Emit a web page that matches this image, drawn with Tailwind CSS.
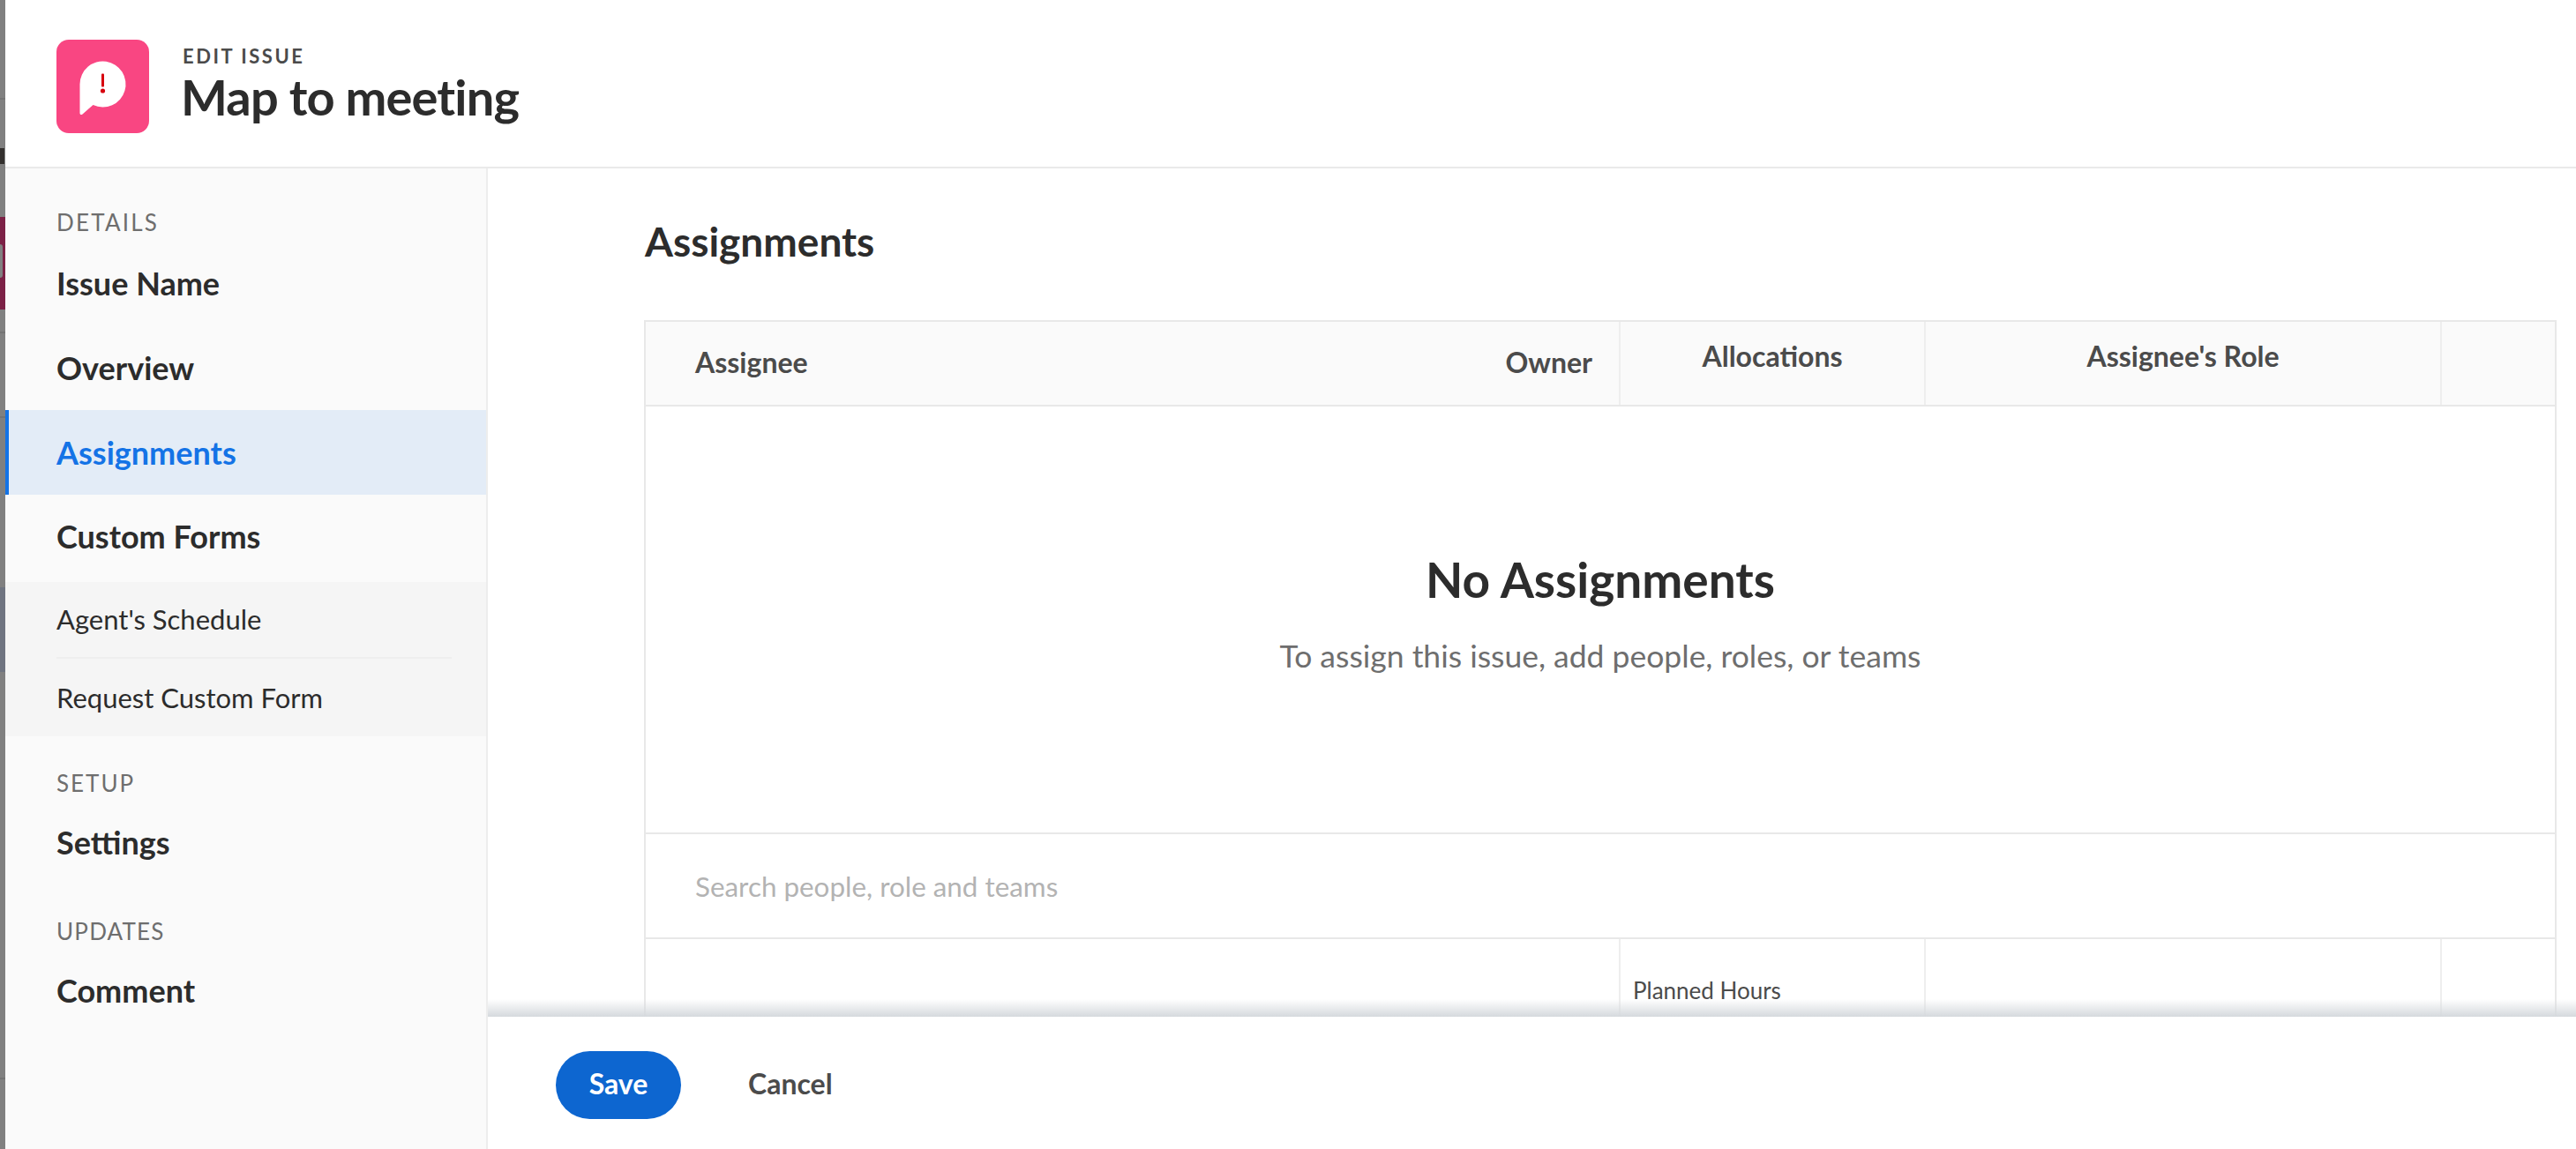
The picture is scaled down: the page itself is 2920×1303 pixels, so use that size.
<!DOCTYPE html>
<html lang="en">
<head>
<meta charset="utf-8">
<title>Edit Issue</title>
<script src="https://cdn.jsdelivr.net/npm/@tailwindcss/browser@4"></script>
</head>
<body class="bg-white">
<div class="flex h-[1303px] w-[2920px] overflow-hidden font-['Lato','Liberation_Sans',sans-serif] text-[#2c2c2c]">
  <div class="relative h-full w-[6px] shrink-0 bg-[#808080]">
    <div class="h-[113px] border-b-2 border-[#747474]"></div>
    <div class="absolute left-0 top-[168px] h-[18px] w-[5px] bg-[#33302e]"></div>
    <div class="absolute left-0 top-[246px] h-[105px] w-full bg-[#7c2146]"></div>
    <div class="absolute left-0 top-[277px] h-[38px] w-[3px] rounded-r-full bg-[#808080]"></div>
    <div class="absolute left-0 top-[376px] h-[2px] w-full bg-[#747474]"></div>
    <div class="absolute left-0 top-[472px] h-[2px] w-full bg-[#747474]"></div>
    <div class="absolute left-0 top-[666px] h-[96px] w-full bg-[#6f7480]"></div>
    <div class="absolute left-0 top-[1222px] h-[2px] w-full bg-[#747474]"></div>
  </div>
  <div class="flex min-w-0 flex-1 flex-col">
    <header class="flex h-[191px] shrink-0 items-start border-b-2 border-[#eaeaea] pl-[58px] pt-[45px]">
      <div class="h-[106px] w-[105px] shrink-0 rounded-[14px] bg-[#f94682]">
        <svg viewBox="0 0 105 105" class="h-full w-full">
          <path d="M26.5 50a26 26 0 1 1 15 23.6L29.5 84c-1.5 1.2-3 .5-3-1.5Z" fill="#fff"/>
          <rect x="51" y="38" width="3" height="15" rx="1" fill="#d7000e"/>
          <circle cx="52.5" cy="57.5" r="2.6" fill="#d7000e"/>
        </svg>
      </div>
      <div class="ml-[38px] flex flex-col">
        <div class="mt-[6px] text-[22px] font-bold leading-[26px] tracking-[2.5px] text-[#4b4b4b]">EDIT ISSUE</div>
        <h1 class="-ml-[2px] text-[56px] font-bold leading-[66px] tracking-[-0.85px]">Map to meeting</h1>
      </div>
    </header>
    <div class="flex min-h-0 flex-1">
      <nav class="flex h-full w-[547px] shrink-0 flex-col border-r-2 border-[#ededed] bg-[#fafafa]">
        <div class="flex h-[82px] items-end pl-[58px] text-[26px] leading-[42px] tracking-[2.2px] text-[#6e6e6e]">DETAILS</div>
        <a class="flex h-[96px] items-center pl-[58px] text-[36px] font-bold">Issue Name</a>
        <a class="flex h-[96px] items-center pl-[58px] text-[36px] font-bold">Overview</a>
        <a class="flex h-[96px] items-center border-l-4 border-[#1473e6] bg-[#e3ecf7] pl-[54px] text-[36px] font-bold text-[#1473e6]">Assignments</a>
        <a class="flex h-[95px] items-center pb-[2px] pl-[58px] text-[36px] font-bold">Custom Forms</a>
        <div class="mt-[4px] bg-[#f5f5f5] pl-[58px] pr-[39px]">
          <a class="flex h-[87px] items-center border-b-2 border-[#eeeeee] text-[31px]">Agent's Schedule</a>
          <a class="flex h-[88px] items-center text-[31px]">Request Custom Form</a>
        </div>
        <div class="flex h-[74px] items-end pl-[58px] text-[26px] leading-[42px] tracking-[2px] text-[#6e6e6e]">SETUP</div>
        <a class="flex h-[92px] items-center pl-[58px] text-[36px] font-bold">Settings</a>
        <div class="flex h-[76px] items-end pl-[58px] text-[26px] leading-[42px] tracking-[1.2px] text-[#6e6e6e]">UPDATES</div>
        <a class="flex h-[92px] items-center pl-[58px] text-[36px] font-bold">Comment</a>
      </nav>
      <main class="flex min-w-0 flex-1 flex-col">
        <div class="min-h-0 flex-1 overflow-hidden pl-[177px] pr-[22px]">
          <h2 class="flex h-[172px] items-center pb-[8px] pl-[1px] text-[46px] font-bold">Assignments</h2>
          <div class="border-x-2 border-t-2 border-[#e8e8e8]">
            <div class="grid h-[94px] grid-cols-[1103px_346px_585px_1fr] bg-[#fafafa] text-[#4b4b4b]">
              <div class="flex items-center justify-between pb-[2px] pl-[56px] pr-[30px] text-[32px] font-bold">
                <span>Assignee</span><span>Owner</span>
              </div>
              <div class="flex items-center justify-center border-l-2 border-[#eeeeee] pb-[16px] text-[32px] font-bold">Allocations</div>
              <div class="flex items-center justify-center border-l-2 border-[#eeeeee] pb-[16px] text-[32px] font-bold">Assignee's Role</div>
              <div class="border-l-2 border-[#eeeeee]"></div>
            </div>
            <div class="flex h-[485px] flex-col items-center border-t-2 border-[#e8e8e8] pt-[163px]">
              <div class="text-[55px] font-bold leading-[66px]">No Assignments</div>
              <div class="mt-[31px] text-[35.5px] leading-[46px] text-[#6e6e6e]">To assign this issue, add people, roles, or teams</div>
            </div>
            <div class="flex h-[121px] items-center border-y-2 border-[#e8e8e8] pl-[56px] pt-[2px] text-[31.4px] text-[#b3b3b3]">Search people, role and teams</div>
            <div class="grid h-[120px] grid-cols-[1103px_346px_585px_1fr]">
              <div></div>
              <div class="border-l-2 border-[#eeeeee] pl-[14px] pt-[41px] text-[26px] leading-[34px] text-[#4b4b4b]">Planned Hours</div>
              <div class="border-l-2 border-[#eeeeee]"></div>
              <div class="border-l-2 border-[#eeeeee]"></div>
            </div>
          </div>
        </div>
        <footer class="relative flex h-[150px] shrink-0 items-center gap-[76px] bg-white pl-[77px] pt-[4px]">
          <div class="absolute inset-x-0 -top-[20px] h-[20px] bg-gradient-to-b from-[#d5d9dd]/0 to-[#d5d9dd]"></div>
          <button class="flex h-[77px] w-[142px] items-center justify-center rounded-full bg-[#0d66d0] pb-[2px] text-[32px] font-bold text-white">Save</button>
          <button class="pb-[2px] text-[32px] font-bold text-[#4b4b4b]">Cancel</button>
        </footer>
      </main>
    </div>
  </div>
</div>
</body>
</html>
